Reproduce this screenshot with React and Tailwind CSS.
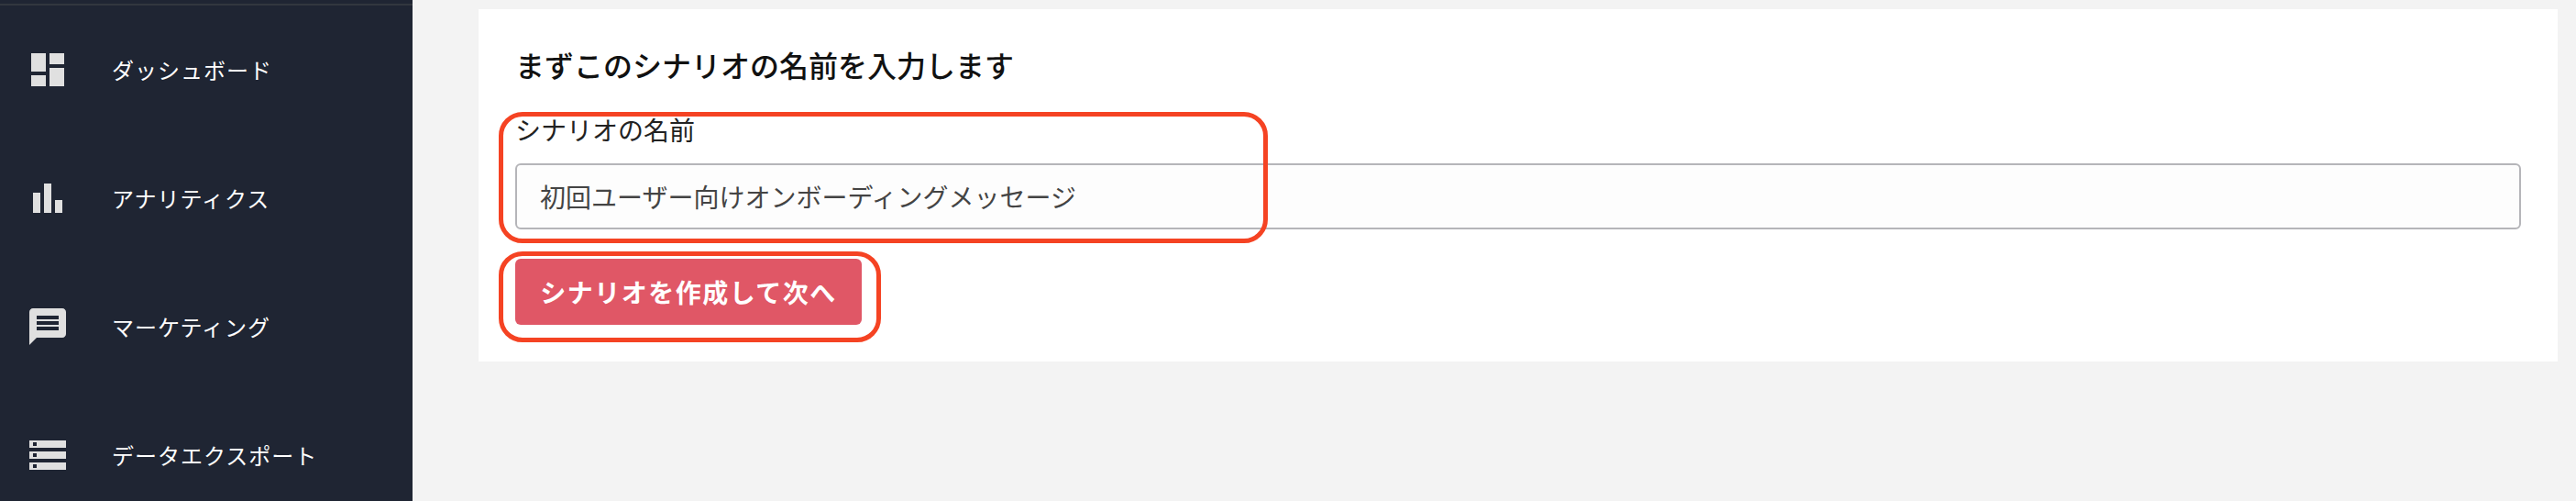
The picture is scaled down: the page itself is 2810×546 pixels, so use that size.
import React from 'react';
import { MdDashboard, MdBarChart, MdMessage, MdStorage } from 'react-icons/md';

const font = { fontFamily: '"Noto Sans CJK JP", "Noto Sans", sans-serif' };

const menu = [
  { label: 'ダッシュボード', icon: MdDashboard },
  { label: 'アナリティクス', icon: MdBarChart },
  { label: 'マーケティング', icon: MdMessage },
  { label: 'データエクスポート', icon: MdStorage },
];

function Sidebar() {
  return (
    <aside className="w-[450px] shrink-0 bg-[#1f2533] overflow-hidden">
      <div className="h-[6px] border-b-2 border-[#32373f]" />
      {menu.map((item) => {
        const Icon = item.icon;
        return (
          <div key={item.label} className="h-[140px] flex items-center pl-[28px]">
            <Icon className="w-[48px] h-[48px] text-[#e0e0e0] shrink-0" />
            <span className="ml-[46px] text-[24px] tracking-[1px] text-white">{item.label}</span>
          </div>
        );
      })}
    </aside>
  );
}

function App() {
  return (
    <div style={font} className="h-screen flex bg-[#f3f3f3] overflow-hidden">
      <Sidebar />
      <main className="flex-1 pl-[72px] pr-[20px] pt-[10px]">
        <section className="relative bg-white h-[384px] px-[40px] pt-[38px]">
          <h2 className="text-[32px] leading-[44px] font-medium text-[#111]">まずこのシナリオの名前を入力します</h2>
          <label className="block mt-[29px] text-[28px] leading-[40px] text-[#222]">シナリオの名前</label>
          <div className="mt-[17px] h-[72px] flex items-center px-[25px] bg-[#fdfdfd] border-2 border-[#b5b5b9] rounded-[6px] text-[28px] text-[#444]">
            初回ユーザー向けオンボーディングメッセージ
          </div>
          <button className="block mt-[32px] w-[378px] h-[72px] bg-[#e05766] rounded-[6px] text-white text-[28px] font-bold tracking-[1.5px]">
            シナリオを作成して次へ
          </button>

          {/* red annotation boxes on top of the form */}
          <div className="absolute left-[22px] top-[112px] w-[839px] h-[143px] border-[5px] border-[#f54323] rounded-[26px]" />
          <div className="absolute left-[22px] top-[264px] w-[417px] h-[99px] border-[5px] border-[#f54323] rounded-[26px]" />
        </section>
      </main>
    </div>
  );
}

export default App;
